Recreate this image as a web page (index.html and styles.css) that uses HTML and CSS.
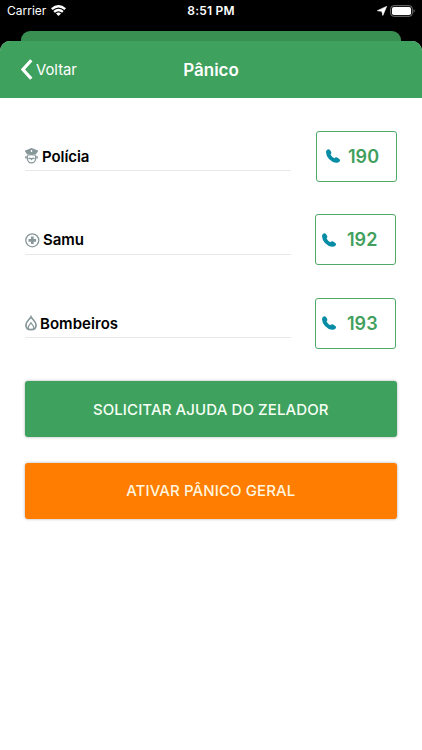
FILE: index.html
```html
<!DOCTYPE html>
<html lang="pt-BR">
<head>
<meta charset="utf-8">
<title>Pânico</title>
<link rel="stylesheet" href="styles.css">
</head>
<body>
<div class="status">
  <div class="status-left"><span class="carrier">Carrier</span>
    <svg class="wifi" width="15" height="11" viewBox="0 0 15 11" fill="none" stroke="#fff" stroke-width="2.3"><path d="M.8 4.2Q7.5-1.8 14.2 4.2M3.1 6.9Q7.5 3.1 11.9 6.9"/><path d="M5 8.6Q7.5 6.6 10 8.6L7.5 11Z" fill="#fff" stroke="none"/></svg>
  </div>
  <span class="clock">8:51 PM</span>
  <div class="status-right">
    <svg width="10" height="10" viewBox="0 0 10 10" fill="#fff"><path d="M9.6.4L5.8 9.4L4.9 5.3L.4 4.7Z" stroke="#fff" stroke-width=".7"/></svg>
    <svg width="26" height="12" viewBox="0 0 26 12"><rect x=".7" y=".7" width="21.6" height="10.6" rx="3" fill="none" stroke="#777" stroke-width="1"/><rect x="2" y="2" width="19" height="8" rx="1.8" fill="#fff"/><path d="M23.6 4.1Q26 6 23.6 7.9Z" fill="#777"/></svg>
  </div>
</div>
<div class="back-sheet"></div>
<div class="sheet">
  <header class="nav">
    <div class="back"><svg width="12" height="21" viewBox="0 0 12 21" fill="none" stroke="#fff" stroke-width="3.2"><path d="M10.3 1.2L2 10.5L10.3 19.8"/></svg><span>Voltar</span></div>
    <h1>Pânico</h1>
  </header>
  <main>
    <div class="row first">
      <div class="label"><svg width="13" height="16" viewBox="0 0 13 16" fill="none" stroke="#87979a" stroke-width="1.3"><path d="M.6 3L6.5.7L12.4 3L10.6 5.5H2.4Z" fill="#87979a"/><path d="M2.4 7.1Q6.5 6 10.6 7.1M2.3 7.5V10.2C2.3 13 4.2 14.9 6.5 14.9S10.7 13 10.7 10.2V7.5M.8 8.3V10.6M12.2 8.3V10.6M3.4 10.8Q5.3 9.5 6.5 11.3Q7.7 9.5 9.6 10.8"/><path d="M6.5 2V4" stroke="#fff"/></svg><span class="policia">Polícia</span></div>
      <a class="call"><svg width="14" height="14" viewBox="0 0 14 14" fill="#078ca5"><path d="M.9.9Q2.6-.6 4 1.1L5.2 3Q5.7 4.1 4.8 5L4.5 5.5Q5.8 7.9 8.4 9.2L9.2 8.6Q10.4 7.8 11.6 8.7L13.3 10Q14.7 11.2 13.4 12.7Q12 14 10 13.8Q6.1 13.3 3 10Q.1 6.8 0 3.2Q0 1.7.9.9Z"/></svg><span>190</span></a>
    </div>
    <div class="row">
      <div class="label"><svg width="15" height="16" viewBox="0 0 15 16" fill="none" stroke="#87979a"><circle cx="7.3" cy="8.3" r="6.5" stroke-width="1.3"/><path d="M7.3 4.5V12.1M3.5 8.3H11.1" stroke-width="2.7"/></svg><span class="samu">Samu</span></div>
      <a class="call"><svg width="14" height="14" viewBox="0 0 14 14" fill="#078ca5"><path d="M.9.9Q2.6-.6 4 1.1L5.2 3Q5.7 4.1 4.8 5L4.5 5.5Q5.8 7.9 8.4 9.2L9.2 8.6Q10.4 7.8 11.6 8.7L13.3 10Q14.7 11.2 13.4 12.7Q12 14 10 13.8Q6.1 13.3 3 10Q.1 6.8 0 3.2Q0 1.7.9.9Z"/></svg><span>192</span></a>
    </div>
    <div class="row">
      <div class="label"><svg width="12" height="16" viewBox="0 0 12 16" fill="none" stroke="#87979a" stroke-width="1.7"><path d="M6 1.8C4.8 4.3.9 6.5.9 10C.9 13.1 3 14.7 6 14.7S11.1 13.1 11.1 10C11.1 6.5 7.2 4.3 6 1.8Z"/><path d="M3.4 14.2C1.8 11.5 4.7 10.2 6 7.8C7.3 10.2 10.2 11.5 8.6 14.2" stroke-width="1.2"/></svg><span class="bombeiros">Bombeiros</span></div>
      <a class="call"><svg width="14" height="14" viewBox="0 0 14 14" fill="#078ca5"><path d="M.9.9Q2.6-.6 4 1.1L5.2 3Q5.7 4.1 4.8 5L4.5 5.5Q5.8 7.9 8.4 9.2L9.2 8.6Q10.4 7.8 11.6 8.7L13.3 10Q14.7 11.2 13.4 12.7Q12 14 10 13.8Q6.1 13.3 3 10Q.1 6.8 0 3.2Q0 1.7.9.9Z"/></svg><span>193</span></a>
    </div>
    <button class="action help">SOLICITAR AJUDA DO ZELADOR</button>
    <button class="action panic">ATIVAR PÂNICO GERAL</button>
  </main>
</div>
</body>
</html>
```
FILE: styles.css
```css
* { box-sizing: border-box; }
body { margin: 0; height: 750px; overflow: hidden; background: #000; font-family: Inter, "Liberation Sans", sans-serif; }
svg { display: block; flex: none; }
.status { height: 31px; padding: 0 7px; display: grid; grid-template-columns: 1fr auto 1fr; align-items: start; color: #fff; font-size: 12px; line-height: 22px; }
.status-left, .status-right { display: flex; align-items: center; height: 22px; }
.status-left { gap: 5px; }
.wifi { margin-top: -2px; }
.clock { font-weight: 600; letter-spacing: .2px; }
.status-right { justify-content: flex-end; gap: 3px; margin-right: -1px; height: 21px; }
.back-sheet { height: 10px; margin: 0 21px; background: #398e52; border-radius: 9px 9px 0 0; }
.sheet { height: 709px; background: #fff; border-radius: 10px 10px 0 0; overflow: hidden; }
.nav { height: 57px; background: #3fa15e; color: #fff; display: grid; grid-template-columns: 1fr auto 1fr; align-items: center; padding: 0 21px; }
.back { display: flex; align-items: center; gap: 3px; font-size: 14.8px; }
.nav h1 { margin: 0; font-size: 17px; font-weight: 600; letter-spacing: 0; }
main { padding: 32.5px 25px 0 24.5px; }
.row { height: 51px; margin-bottom: 32.5px; display: flex; justify-content: space-between; padding-right: 1px; }
.row.first { padding-right: 0; }
.label { width: 266px; height: 40.5px; border-bottom: 1px solid #e8e8e8; display: flex; align-items: center; padding-top: 12px; font-size: 15px; font-weight: 600; }
.label span { margin-left: 3.5px; }
.label .policia { margin-left: 4.5px; letter-spacing: -.08px; }
.samu { letter-spacing: -.05px; }
.bombeiros { letter-spacing: .05px; }
.call { width: 81px; height: 51px; border: 1px solid #4fa969; border-radius: 3px; color: #429f5e; display: flex; align-items: center; padding-left: 6px; font-size: 18px; font-weight: 600; }
.call span { margin-left: 11px; }
.first .call { padding-left: 9px; }
.first .call span { margin-left: 8px; }
.action { display: block; width: 372.5px; height: 56px; padding: 0; border: 0; border-radius: 3px; box-shadow: 0 0 3px #0005; color: #f5fff4; font: 500 15px Inter, "Liberation Sans", sans-serif; letter-spacing: .1px; }
.help { background: #3fa15e; }
.panic { background: #ff7d00; margin-top: 25.5px; color: #fff5df; }
```
